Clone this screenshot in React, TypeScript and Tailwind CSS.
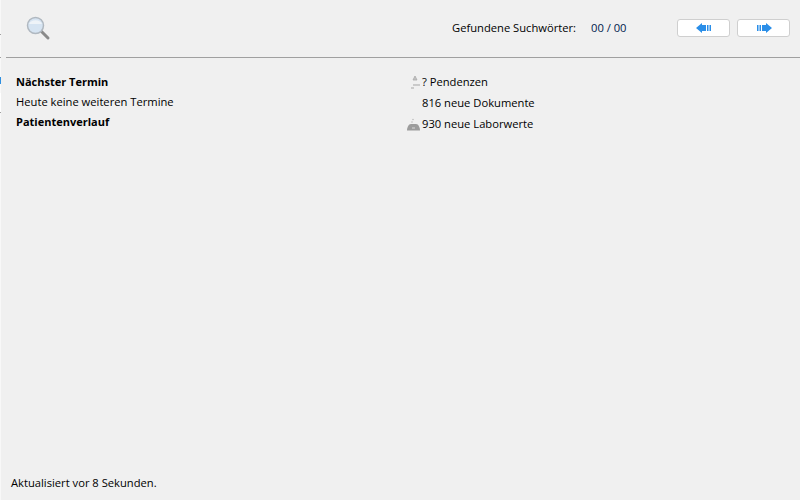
export default function App() {
  return (
    <div className="relative w-[800px] h-[500px] bg-[#f0f0f0] text-[11.2px] leading-[16px] text-[#000] flex flex-col overflow-hidden" style={{ fontFamily: '"Open Sans", sans-serif' }}>
      <div className="absolute left-0 top-0 w-[1px] h-[500px] bg-[#f8f8f8]" />
      <div className="absolute left-0 top-[34px] w-[1px] h-[1px] bg-[#a0a0a0]" />
      <div className="absolute left-0 top-[57px] w-[1px] h-[1px] bg-[#a0a0a0]" />
      <div className="absolute left-0 top-[77px] w-[1px] h-[7px] bg-[#2f8fe0]" />
      <div className="absolute left-0 top-[93px] w-[1px] h-[19px] bg-white" />
      <div className="absolute left-0 top-[112px] w-[1px] h-[1px] bg-[#a0a0a0]" />
      <header className="h-[58px] shrink-0 ml-[6px] border-b border-[#a0a0a0] flex items-center pb-[1px]">
        <svg className="ml-[19px] mb-[1px]" width="26" height="26" viewBox="0 0 26 26">
          <line x1="16" y1="16" x2="23" y2="23" stroke="#8a8a8a" strokeWidth="3" strokeLinecap="round" />
          <circle cx="10.5" cy="10.5" r="8" fill="#d6e4f2" stroke="#b0b8c0" strokeWidth="1.5" />
          <path d="M4 9a7 6 0 0 1 13 0z" fill="#eef3f8" />
        </svg>
        <span className="ml-[401px] w-[139px]">Gefundene Suchwörter:</span>
        <span className="w-[86px] text-[#001a4d]">00 / 00</span>
        <button className="w-[53px] h-[18px] bg-white border border-[#cfcfcf] rounded-[3px] flex items-center justify-center">
          <svg width="16" height="10" viewBox="0 0 16 10"><path d="M0 5 6 0v2h4v6H6v2z" fill="#2a8ee8" /><rect x="11" y="2" width="1.5" height="6" fill="#2a8ee8" /><rect x="13.5" y="2" width="1.5" height="6" fill="#2a8ee8" /></svg>
        </button>
        <button className="ml-[7px] w-[53px] h-[18px] bg-white border border-[#cfcfcf] rounded-[3px] flex items-center justify-center">
          <svg width="16" height="10" viewBox="0 0 16 10"><path d="M16 5 10 0v2H6v6h4v2z" fill="#2a8ee8" /><rect x="3.5" y="2" width="1.5" height="6" fill="#2a8ee8" /><rect x="1" y="2" width="1.5" height="6" fill="#2a8ee8" /></svg>
        </button>
      </header>
      <main className="flex-1 flex pt-[16px]">
        <div className="w-[406px] pl-[16px] flex flex-col gap-[4px]">
          <div className="font-bold text-[11px]">Nächster Termin</div>
          <div>Heute keine weiteren Termine</div>
          <div className="font-bold text-[11px]">Patientenverlauf</div>
        </div>
        <div className="flex flex-col gap-[5px]">
          <div className="flex items-center">
            <svg width="16" height="16" viewBox="0 0 16 16"><path d="M7 6 9 2l2 4z" fill="#c4c4c4" stroke="#a8a8a8" strokeWidth="0.8" /><path d="M7 11h7M5 14h3" stroke="#a5a5a5" /></svg>
            <span>? Pendenzen</span>
          </div>
          <div className="pl-[16px]">816 neue Dokumente</div>
          <div className="flex items-center">
            <svg width="16" height="16" viewBox="0 0 16 16"><path d="M1 14.5c0-3 1.500-6.500 4-6.500h5c2.500 0 4 3.500 4 6.500z" fill="#9c9c9c" /><circle cx="7" cy="3.500" r="0.8" fill="#bdbdbd" /><circle cx="6" cy="6" r="0.8" fill="#bdbdbd" /><path d="M6 12h3" stroke="#d8d8d8" /></svg>
            <span>930 neue Laborwerte</span>
          </div>
        </div>
      </main>
      <footer className="pl-[11px] pb-[9px]">Aktualisiert vor 8 Sekunden.</footer>
    </div>
  );
}
